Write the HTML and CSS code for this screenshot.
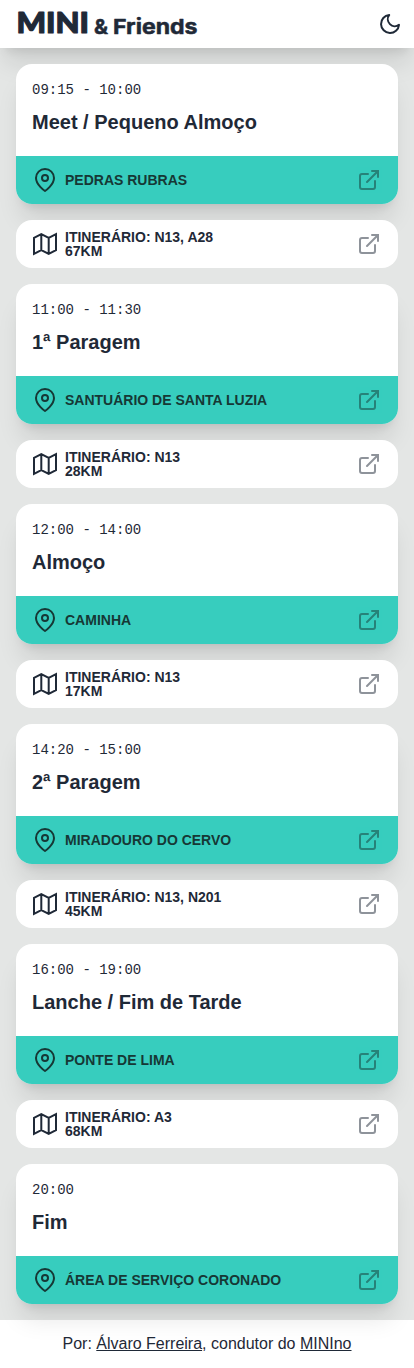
FILE: index.html
```
<!DOCTYPE html>
<html lang="pt">
<head>
<meta charset="utf-8">
<meta name="viewport" content="width=device-width, initial-scale=1">
<title>MINI &amp; Friends</title>
<link rel="stylesheet" href="styles.css">
</head>
<body>
<svg class="sprite" aria-hidden="true">
  <symbol id="pin" viewBox="0 0 24 24"><path d="M21 10c0 7-9 13-9 13s-9-6-9-13a9 9 0 0 1 18 0z"/><circle cx="12" cy="10" r="3"/></symbol>
  <symbol id="map" viewBox="0 0 24 24"><path d="M1 5.9L8.3 2.2l7.4 3.7L23 2.2v15.9l-7.3 3.7-7.4-3.7L1 21.8zM8.3 2.2v15.9M15.7 5.9v15.9"/></symbol>
  <symbol id="link" viewBox="0 0 24 24"><path d="M18 13v6a2 2 0 0 1-2 2H5a2 2 0 0 1-2-2V8a2 2 0 0 1 2-2h6M15 3h6v6M10 14L21 3"/></symbol>
</svg>
<header class="header">
  <svg class="brand" width="186" height="48" role="img" aria-label="MINI &amp; Friends">
    <text class="brand-main" x="0.4" y="33.3" textLength="72.5" lengthAdjust="spacingAndGlyphs">MINI</text>
    <text class="brand-sub" x="78" y="34" textLength="14" lengthAdjust="spacingAndGlyphs">&amp;</text>
    <text class="brand-sub" x="97" y="34" textLength="84.5" lengthAdjust="spacingAndGlyphs">Friends</text>
  </svg>
  <svg class="icon" viewBox="0 0 24 24"><path d="M21 12.79A9 9 0 1 1 11.21 3 7 7 0 0 0 21 12.79z"/></svg>
</header>
<main class="list">
  <article class="card">
    <div class="info"><time class="time">09:15 - 10:00</time><h2 class="title">Meet / Pequeno Almoço</h2></div>
    <a class="row place"><svg class="icon"><use href="#pin"/></svg><span class="label">PEDRAS RUBRAS</span><svg class="icon out"><use href="#link"/></svg></a>
  </article>
  <a class="row route"><svg class="icon map"><use href="#map"/></svg><span class="label">ITINERÁRIO: N13, A28<br>67KM</span><svg class="icon out"><use href="#link"/></svg></a>
  <article class="card">
    <div class="info"><time class="time">11:00 - 11:30</time><h2 class="title">1ª Paragem</h2></div>
    <a class="row place"><svg class="icon"><use href="#pin"/></svg><span class="label">SANTUÁRIO DE SANTA LUZIA</span><svg class="icon out"><use href="#link"/></svg></a>
  </article>
  <a class="row route"><svg class="icon map"><use href="#map"/></svg><span class="label">ITINERÁRIO: N13<br>28KM</span><svg class="icon out"><use href="#link"/></svg></a>
  <article class="card">
    <div class="info"><time class="time">12:00 - 14:00</time><h2 class="title">Almoço</h2></div>
    <a class="row place"><svg class="icon"><use href="#pin"/></svg><span class="label">CAMINHA</span><svg class="icon out"><use href="#link"/></svg></a>
  </article>
  <a class="row route"><svg class="icon map"><use href="#map"/></svg><span class="label">ITINERÁRIO: N13<br>17KM</span><svg class="icon out"><use href="#link"/></svg></a>
  <article class="card">
    <div class="info"><time class="time">14:20 - 15:00</time><h2 class="title">2ª Paragem</h2></div>
    <a class="row place"><svg class="icon"><use href="#pin"/></svg><span class="label">MIRADOURO DO CERVO</span><svg class="icon out"><use href="#link"/></svg></a>
  </article>
  <a class="row route"><svg class="icon map"><use href="#map"/></svg><span class="label">ITINERÁRIO: N13, N201<br>45KM</span><svg class="icon out"><use href="#link"/></svg></a>
  <article class="card">
    <div class="info"><time class="time">16:00 - 19:00</time><h2 class="title">Lanche / Fim de Tarde</h2></div>
    <a class="row place"><svg class="icon"><use href="#pin"/></svg><span class="label">PONTE DE LIMA</span><svg class="icon out"><use href="#link"/></svg></a>
  </article>
  <a class="row route"><svg class="icon map"><use href="#map"/></svg><span class="label">ITINERÁRIO: A3<br>68KM</span><svg class="icon out"><use href="#link"/></svg></a>
  <article class="card">
    <div class="info"><time class="time">20:00</time><h2 class="title">Fim</h2></div>
    <a class="row place"><svg class="icon"><use href="#pin"/></svg><span class="label">ÁREA DE SERVIÇO CORONADO</span><svg class="icon out"><use href="#link"/></svg></a>
  </article>
</main>
<footer class="footer">Por: <span class="credit">Álvaro Ferreira</span>, condutor do <span class="credit">MINIno</span></footer>
</body>
</html>
```
FILE: styles.css
```
* { box-sizing: border-box; }
body {
  margin: 0;
  background: #e4e6e5;
  color: #1f2937;
  font: 16px/24px "Liberation Sans", Arial, sans-serif;
}
.sprite { display: none; }
.header, .card {
  position: relative;
  background: #fff;
  box-shadow: 0 20px 25px -5px rgba(0, 0, 0, .1), 0 8px 10px -6px rgba(0, 0, 0, .1);
}
.header {
  display: flex;
  align-items: center;
  justify-content: space-between;
  height: 48px;
  padding: 0 12px 0 16px;
}
.brand { display: block; fill: #1f2937; stroke: #1f2937; stroke-linejoin: round; }
.brand-main {
  font-family: Lato, sans-serif;
  font-size: 29px;
  font-weight: 900;
  stroke-width: 1.2;
}
.brand-sub {
  font-family: Inter, sans-serif;
  font-size: 20.5px;
  font-weight: 700;
  stroke-width: .5;
}
.icon {
  flex: none;
  width: 24px;
  height: 24px;
  fill: none;
  stroke: currentColor;
  stroke-width: 2;
  stroke-linecap: round;
  stroke-linejoin: round;
}
.list { display: flex; flex-direction: column; gap: 16px; padding: 16px; }
.card { border-radius: 16px; overflow: hidden; }
.info { height: 92px; padding: 16px; }
.time { display: block; font: 14px/20px "Liberation Mono", monospace; }
.title { margin: 8px 0 0; font-size: 20px; line-height: 28px; font-weight: 700; }
.row { display: flex; align-items: center; height: 48px; padding: 0 17px; }
.label { flex: 1; margin-left: 8px; font-size: 14px; line-height: 14px; font-weight: 700; }
.place { background: #37cdbe; color: #163835; }
.route { position: relative; background: #fff; border-radius: 16px; }
.map { stroke-linejoin: miter; }
.out { opacity: .5; stroke-linejoin: miter; }
.footer { height: 48px; padding: 12px; background: #fff; text-align: center; }
.credit { text-decoration: underline; }
```
